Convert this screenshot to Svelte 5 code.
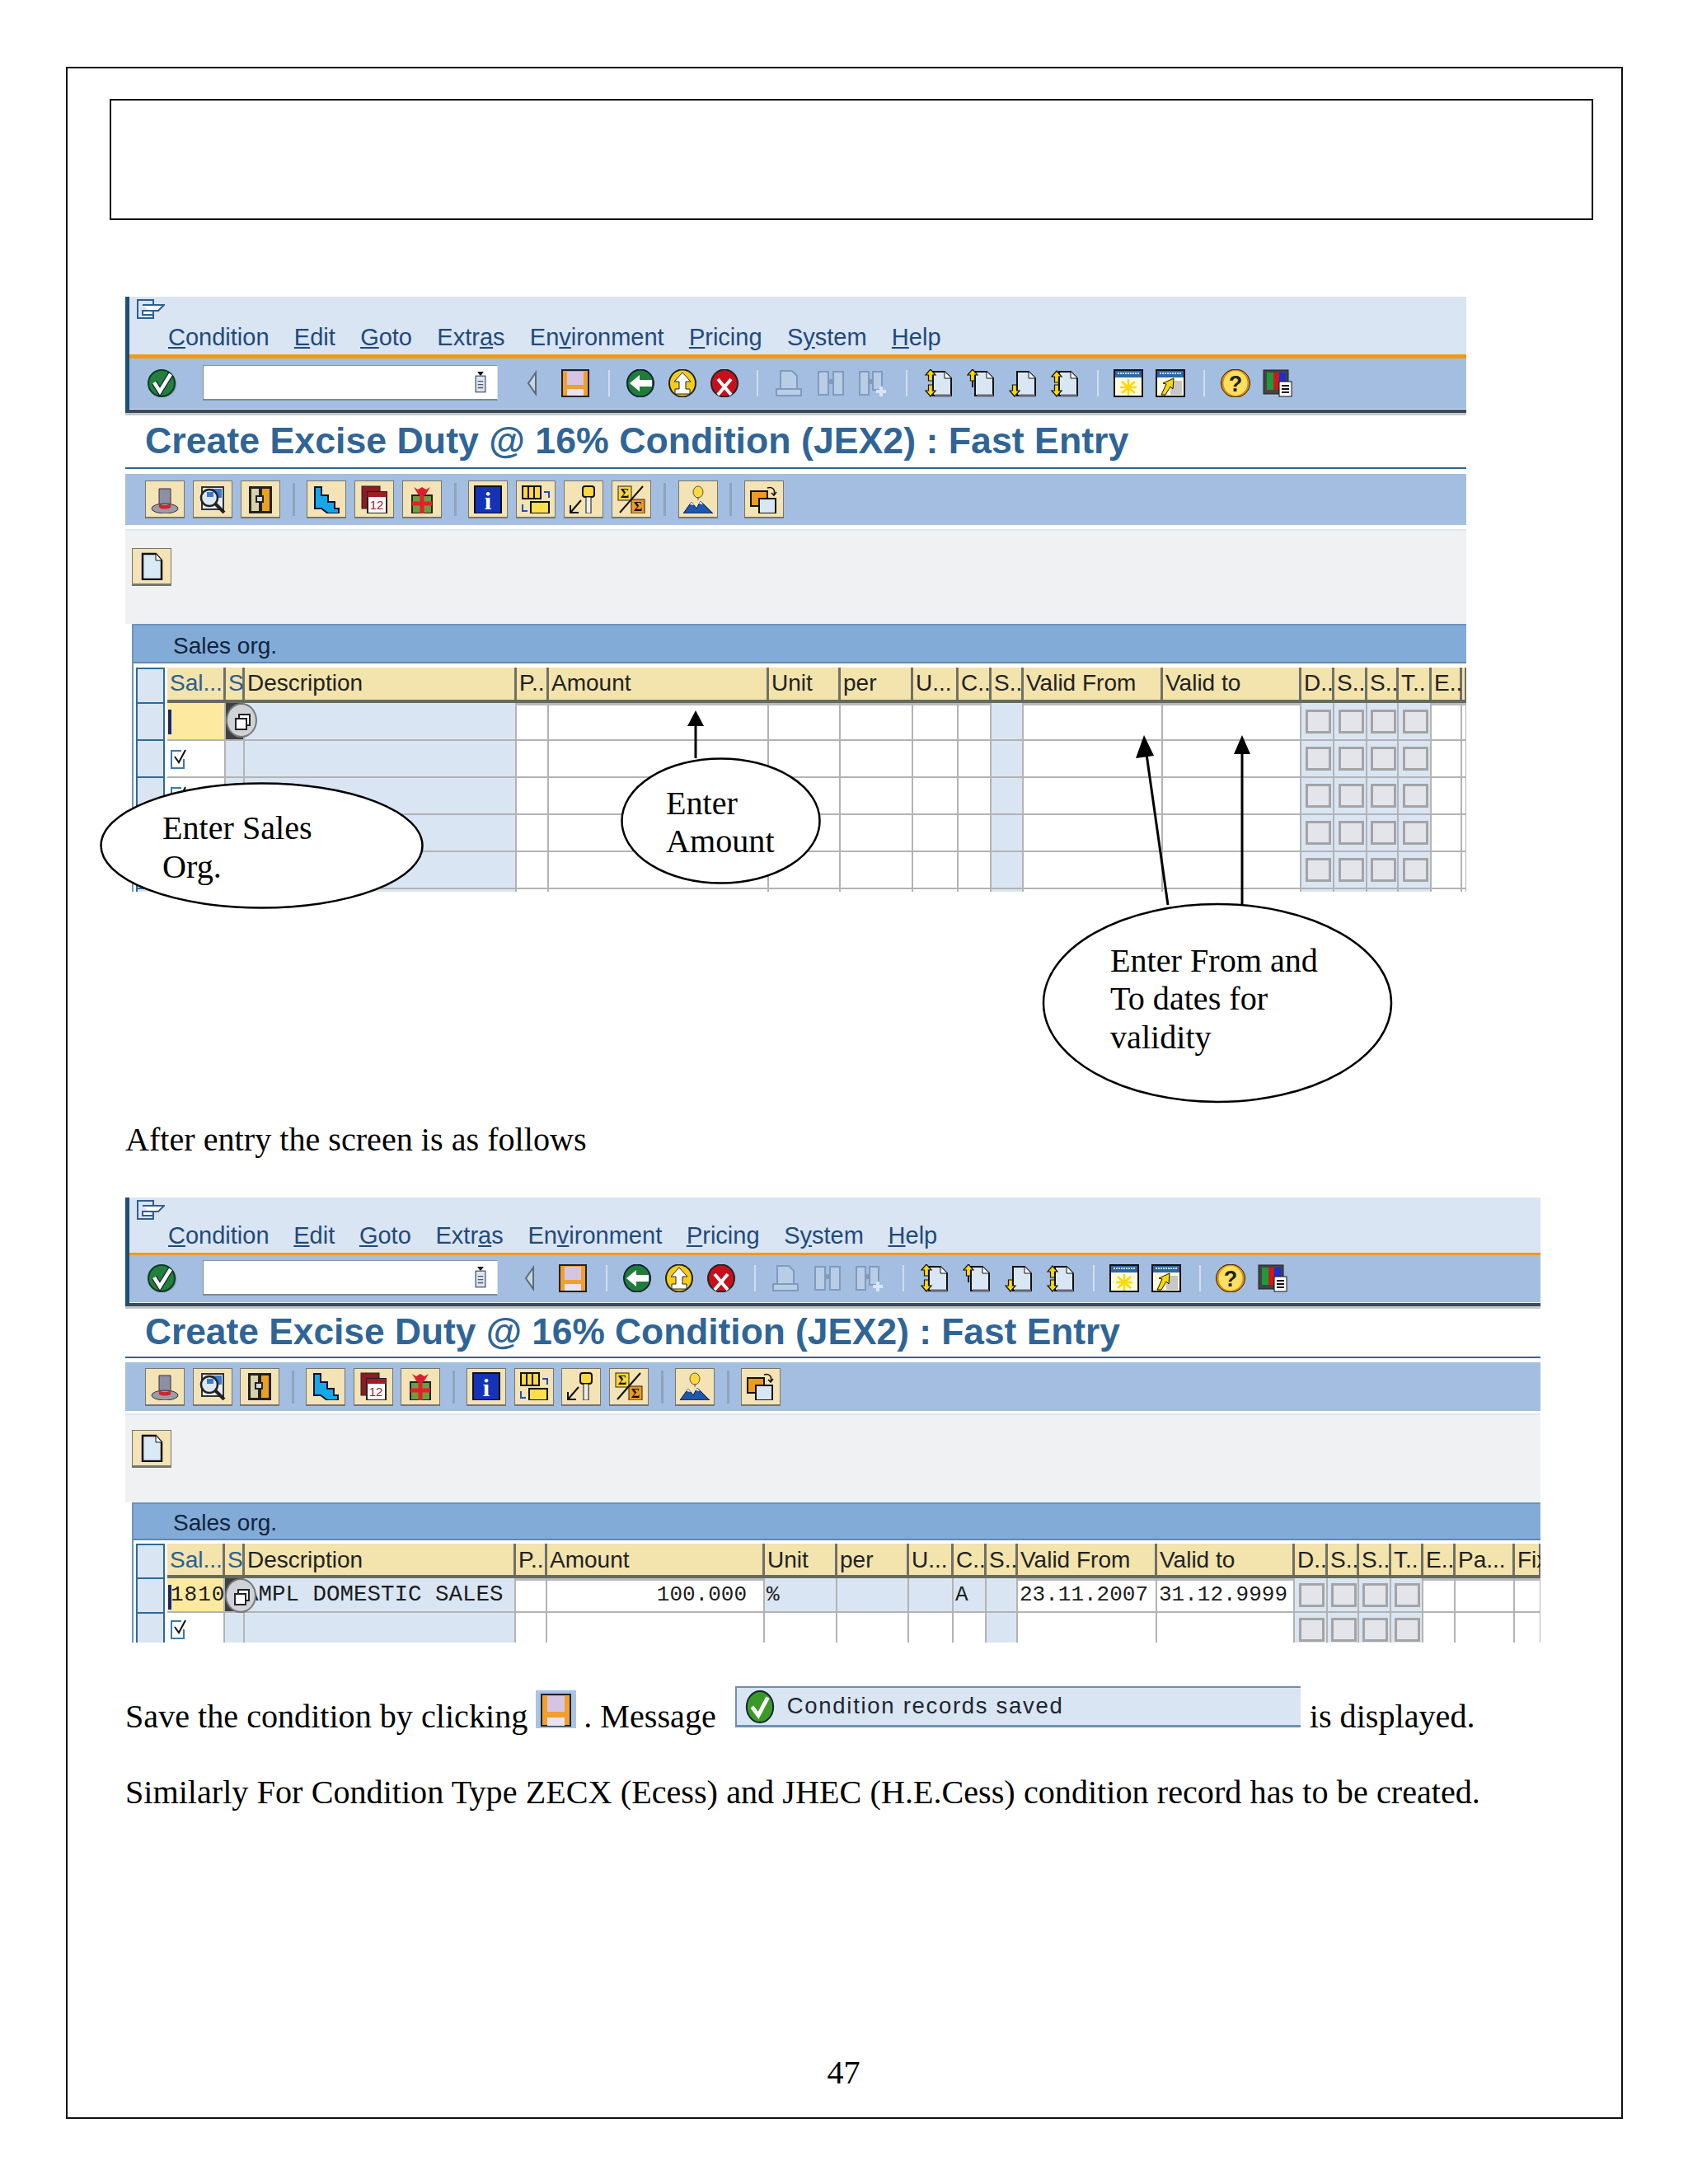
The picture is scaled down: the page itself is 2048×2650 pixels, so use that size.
<script>
	const off = 'stroke="#7f9bbd" fill="#b9cde5" stroke-width="2"';
	const arrowUp = (x, y) => `<path d="M${x} ${y}l6 7h-3.5v7h-5v-7H${x - 6}z" fill="#ffd800" stroke="#111" stroke-width="1.2"/>`;
	const arrowDown = (x, y) => `<path d="M${x} ${y}l6-7h-3.5v-7h-5v7H${x - 6}z" fill="#ffd800" stroke="#111" stroke-width="1.2"/>`;
	const doc = '<path d="M12 3h14l8 8v21H12z" fill="#d9e6f4" stroke="#111" stroke-width="2"/><path d="M26 3v8h8" fill="#fff" stroke="#111"/><path d="M14 32h20" stroke="#667" stroke-width="3"/>';
	const windowTop = '<rect x="1" y="1" width="34" height="32" fill="#fffbe0" stroke="#111" stroke-width="2"/><rect x="2" y="2" width="32" height="8" fill="#2c68a8"/><path d="M5 5h26" stroke="#cfe0f4" stroke-width="2" stroke-dasharray="2 1"/>';

	const icons = {
		check: '<ellipse cx="19" cy="18" rx="16" ry="16" fill="#7f93ad"/><ellipse cx="17" cy="17" rx="16" ry="16" fill="#22803c" stroke="#0d3d20" stroke-width="2"/><path d="M8 16l7 11L28 6" fill="none" stroke="#123" stroke-width="7"/><path d="M8 16l7 11L28 6" fill="none" stroke="#fff" stroke-width="4.5"/>',
		nav: '<path d="M14 4L5 17l9 13z" fill="#c9d6e6" stroke="#5e6b78" stroke-width="2"/>',
		save: '<rect x="2" y="1" width="32" height="32" fill="#f0a02c" stroke="#222" stroke-width="2"/><rect x="8" y="3" width="20" height="16" fill="#d5c5e2"/><rect x="8" y="24" width="20" height="8" fill="#e9e2f0"/>',
		back: '<ellipse cx="18" cy="17" rx="16" ry="16.5" fill="#1f7d3c" stroke="#123" stroke-width="2"/><path d="M5 17l12-10v6h15v8H17v6z" fill="#fff"/>',
		up: '<ellipse cx="18" cy="17" rx="16" ry="16.5" fill="#f6cc1c" stroke="#222" stroke-width="2"/><path d="M18 4l10 11h-6v9h5v6H9v-6h5v-9H8z" fill="#fff" stroke="#222"/>',
		cancel: '<ellipse cx="18" cy="17" rx="16" ry="16.5" fill="#c8101c" stroke="#222" stroke-width="2"/><path d="M10 12l16 19M26 12L10 31" stroke="#fff" stroke-width="4"/>',
		print: `<path d="M8 2h14l6 6v16H8z" ${off}/><rect x="3" y="24" width="30" height="8" ${off}/>`,
		find: `<rect x="3" y="3" width="12" height="28" ${off}/><rect x="21" y="3" width="12" height="28" ${off}/><path d="M15 15h6" stroke="#7f9bbd" stroke-width="6"/>`,
		findNext: `<rect x="2" y="3" width="11" height="28" ${off}/><rect x="18" y="3" width="11" height="22" ${off}/><path d="M13 15h5" stroke="#7f9bbd" stroke-width="6"/><path d="M28 21v12M22 27h12" stroke="#d9e6f4" stroke-width="4"/>`,
		first: doc + arrowUp(9, 0) + arrowDown(9, 33),
		prev: doc + arrowUp(9, 0) + '<path d="M9 14v8" stroke="#111" stroke-width="2"/>',
		next: doc + arrowDown(9, 33),
		last: doc + arrowUp(9, 2) + arrowDown(9, 33),
		newSession: windowTop + '<path d="M18 12v20M8 22h20M10 15l16 14M26 15L10 29" stroke="#ffd800" stroke-width="2.5"/>',
		shortcut: windowTop + '<rect x="18" y="14" width="14" height="17" fill="#c7c7c7"/><path d="M7 31l6-13-4-1 13-6-1 13-3-3-6 10z" fill="#ffd800" stroke="#111"/>',
		help: '<ellipse cx="18" cy="17" rx="16" ry="16.5" fill="#ffe060" stroke="#e08a10" stroke-width="3"/><ellipse cx="18" cy="17" rx="17.5" ry="16.8" fill="none" stroke="#222"/><text x="18" y="27" text-anchor="middle" font-family="Liberation Sans" font-weight="700" font-size="27" fill="#222">?</text>',
		layout: '<rect x="1" y="1" width="30" height="29" fill="#444" stroke="#222"/><rect x="5" y="4" width="8" height="21" fill="#1c9a3c"/><rect x="13" y="4" width="7" height="21" fill="#d01818"/><rect x="20" y="4" width="8" height="21" fill="#1a2fd0"/><rect x="20" y="15" width="15" height="18" fill="#fff" stroke="#111"/><path d="M23 20h9M23 24h9M23 28h9" stroke="#111" stroke-width="2"/>',
		hat: '<path d="M11 4h14v21H11z" fill="#8c8fa6" stroke="#333"/><ellipse cx="18" cy="28" rx="16" ry="6" fill="#9a9ca8" stroke="#333"/><path d="M11 22c4 3 10 3 14 0v5c-4 2-10 2-14 0z" fill="#d9202a"/>',
		detail: '<rect x="5" y="2" width="26" height="27" fill="#e8eef5" stroke="#333" stroke-width="2"/><rect x="11" y="4" width="18" height="11" fill="#3a7bd0"/><circle cx="14" cy="15" r="10" fill="#dce8f4" stroke="#222" stroke-width="2.5"/><path d="M11 8h8v6h-8z" fill="#3a7bd0"/><path d="M21 22l11 11" stroke="#222" stroke-width="4"/>',
		bracket: '<rect x="4" y="1" width="28" height="33" fill="#222"/><rect x="7" y="4" width="9" height="27" fill="#d9d2a8"/><rect x="20" y="4" width="9" height="27" fill="#e8a21e"/><path d="M12 12h10v9H12" fill="#222"/><path d="M14 14h6v5h-6z" fill="#cfd8e0"/>',
		stairs: '<path d="M4 2h8v10h8v8h8v8h5v6H20l-8-6H4z" fill="#14a8e8" stroke="#113" stroke-width="2"/>',
		calendar: '<rect x="3" y="1" width="22" height="27" fill="#8c1c24" stroke="#222"/><rect x="10" y="8" width="23" height="26" fill="#fff" stroke="#222" stroke-width="2"/><rect x="10" y="8" width="23" height="6" fill="#a01c28"/><text x="21" y="29" text-anchor="middle" font-family="Liberation Sans" font-size="15" fill="#a01c28">12</text>',
		gift: '<rect x="6" y="12" width="24" height="22" fill="#6c9e3c" stroke="#222" stroke-width="2"/><path d="M18 12v22M6 22h24" stroke="#e0202c" stroke-width="5"/><path d="M8 2l6 10h8l6-10-5 3-5-3-5 3z" fill="#d9202a"/>',
		info: '<rect x="2" y="1" width="32" height="33" fill="#1433b8" stroke="#111" stroke-width="2"/><text x="18" y="29" text-anchor="middle" font-family="Liberation Serif" font-weight="700" font-size="30" fill="#fff">i</text>',
		columns: '<rect x="2" y="1" width="22" height="15" fill="#ffd83c" stroke="#111" stroke-width="2"/><path d="M9 1v15M16 1v15" stroke="#111" stroke-width="2"/><rect x="12" y="20" width="22" height="14" fill="#ffe04c" stroke="#111" stroke-width="2"/><path d="M28 8h6v7M2 23v8h6" fill="none" stroke="#1c4ec0" stroke-width="2"/>',
		key: '<rect x="17" y="1" width="14" height="13" rx="3" fill="#ffd83c" stroke="#111" stroke-width="2"/><rect x="21" y="14" width="6" height="20" fill="#eee" stroke="#111"/><path d="M2 33l13-15M2 24v9h10" fill="none" stroke="#111" stroke-width="2"/>',
		sigma: '<rect x="2" y="1" width="16" height="17" fill="#ffd83c" stroke="#222"/><rect x="18" y="17" width="16" height="17" fill="#f09a1c" stroke="#222"/><path d="M4 33L32 1" stroke="#111" stroke-width="2"/><text x="10" y="15" text-anchor="middle" font-family="Liberation Serif" font-weight="700" font-size="16" fill="#111">Σ</text><text x="26" y="31" text-anchor="middle" font-family="Liberation Serif" font-weight="700" font-size="16" fill="#111">Σ</text>',
		mountain: '<ellipse cx="18" cy="8" rx="6" ry="7" fill="#ffd83c" stroke="#555"/><path d="M18 14v4" stroke="#555"/><path d="M0 34l10-14 6 8 5-9 15 15z" fill="#1c58b0" stroke="#113"/><path d="M8 23l2-3 3 4zM19 22l2-3 3 4z" fill="#fff"/>',
		copy: '<rect x="2" y="7" width="20" height="18" fill="#f09a1c" stroke="#111" stroke-width="2"/><rect x="12" y="16" width="20" height="18" fill="#d9e6f4" stroke="#111" stroke-width="2"/><path d="M22 3c6-2 10 2 8 8m-3-2l3 3 3-4" fill="none" stroke="#111" stroke-width="1.5"/>',
		page: '<path d="M7 2h16l7 8v23H7z" fill="#d9e9f6" stroke="#111" stroke-width="2.5"/><path d="M23 2v8h7" fill="#fff" stroke="#111"/>'
	};

	const pageGroups = [
		['save'],
		['back', 'up', 'cancel'],
		['print', 'find', 'findNext'],
		['first', 'prev', 'next', 'last'],
		['newSession', 'shortcut'],
		['help', 'layout']
	];
	const appGroups = [
		['hat', 'detail', 'bracket'],
		['stairs', 'calendar', 'gift'],
		['info', 'columns', 'key', 'sigma'],
		['mountain'],
		['copy']
	];
	const menus = [
		['C', 'ondition'], ['E', 'dit'], ['G', 'oto'], ['Extr', 'a', 's'],
		['En', 'v', 'ironment'], ['P', 'ricing'], ['S', 'y', 'stem'], ['H', 'elp']
	];

	// k: sal, btn, blue, white, chk. v: text of the first row. fill: first row turns blue
	const first = [
		{ cls: 'a', rows: 6, cols: [
			{ h: 'Sal...', x: 202, k: 'sal', key: true }, { h: 'S', x: 273, k: 'btn', key: true },
			{ h: 'Description', x: 296, k: 'blue' }, { h: 'P..', x: 626 }, { h: 'Amount', x: 665 },
			{ h: 'Unit', x: 932 }, { h: 'per', x: 1019 }, { h: 'U...', x: 1107 }, { h: 'C..', x: 1162 },
			{ h: 'S..', x: 1202, k: 'blue' }, { h: 'Valid From', x: 1241 }, { h: 'Valid to', x: 1410 },
			{ h: 'D..', x: 1578, k: 'chk' }, { h: 'S..', x: 1618, k: 'chk' }, { h: 'S..', x: 1658, k: 'chk' },
			{ h: 'T..', x: 1696, k: 'chk' }, { h: 'E..', x: 1736 }, { h: '', x: 1773 }
		], end: 1779 },
		{ cls: 'b', rows: 2, cols: [
			{ h: 'Sal...', x: 202, k: 'sal', key: true, v: '1810' }, { h: 'S', x: 272, k: 'btn', key: true },
			{ h: 'Description', x: 296, k: 'blue', v: 'AMPL DOMESTIC SALES' }, { h: 'P..', x: 625 },
			{ h: 'Amount', x: 663, v: '100.000', right: true }, { h: 'Unit', x: 927, fill: true, v: '%' },
			{ h: 'per', x: 1015, fill: true }, { h: 'U...', x: 1102, fill: true }, { h: 'C..', x: 1156, fill: true, v: 'A' },
			{ h: 'S..', x: 1196, k: 'blue' }, { h: 'Valid From', x: 1234, v: '23.11.2007' }, { h: 'Valid to', x: 1403, v: '31.12.9999' },
			{ h: 'D..', x: 1570, k: 'chk' }, { h: 'S..', x: 1610, k: 'chk' }, { h: 'S..', x: 1648, k: 'chk' },
			{ h: 'T..', x: 1687, k: 'chk' }, { h: 'E..', x: 1726 }, { h: 'Pa...', x: 1765 }, { h: 'Fix', x: 1837 }
		], end: 1869 }
	];

	const template = (s) =>
		s.cols.map((c, i) => `${(s.cols[i + 1]?.x ?? s.end) - c.x}px`).join(' ');
	const cellClass = (c, r) => {
		if (c.k === 'sal') return r === 0 ? 'sal' : '';
		if (c.k === 'btn') return r === 0 ? 'dark' : 'blue';
		if (c.k === 'blue' || c.k === 'chk') return 'blue';
		return c.fill && r === 0 ? 'blue' : '';
	};
</script>

{#snippet icon(name)}
	<svg class="ic" viewBox="0 0 36 34">{@html icons[name]}</svg>
{/snippet}

{#snippet screen(s)}
	<section class="screen {s.cls}">
		<div class="head">
			<div class="menubar">
				<svg class="corner" viewBox="0 0 34 24">
					<path d="M1 1h19v22H1z" fill="none" stroke="#2d5f96" stroke-width="2" />
					<path d="M7 7h26l-7 7H7v5h13" fill="#fff" stroke="#2d5f96" stroke-width="2" />
				</svg>
				<nav class="menu">
					{#each menus as m}
						{#if m.length === 2}
							<span><u>{m[0]}</u>{m[1]}</span>
						{:else}
							<span>{m[0]}<u>{m[1]}</u>{m[2]}</span>
						{/if}
					{/each}
				</nav>
			</div>
			<div class="systembar">
				{@render icon('check')}
				<div class="command">
					<svg class="drop" viewBox="0 0 24 40">
						<path d="M6 0h12l-6 8z" fill="#111" />
						<rect x="3" y="8" width="18" height="30" fill="#dbe6f2" stroke="#556" stroke-width="2" />
						<path d="M7 18h10M7 24h10M7 30h10" stroke="#556" stroke-width="2" />
					</svg>
				</div>
				<span class="nav">{@render icon('nav')}</span>
				{#each pageGroups as group, i}
					{#if i > 0}<i class="sep"></i>{/if}
					<div class="group">
						{#each group as name}
							{@render icon(name)}
						{/each}
					</div>
				{/each}
			</div>
		</div>
		<h1>Create Excise Duty @ 16% Condition (JEX2) : Fast Entry</h1>
		<div class="appbar">
			{#each appGroups as group, i}
				{#if i > 0}<i class="sep"></i>{/if}
				<div class="btns">
					{#each group as name}
						<span class="btn">{@render icon(name)}</span>
					{/each}
				</div>
			{/each}
		</div>
		<div class="work">
			<span class="btn create">{@render icon('page')}</span>
		</div>
		<div class="table">
			<div class="caption">Sales org.</div>
			<div class="grid">
				<div class="selectors">
					<i class="sel top"></i>
					{#each Array(s.rows) as _}
						<i class="sel"></i>
					{/each}
				</div>
				<div class="data">
					<div class="thead" style="grid-template-columns: {template(s)}">
						{#each s.cols as c}
							<span class:key={c.key}>{c.h}</span>
						{/each}
					</div>
					{#each Array(s.rows) as _, r}
						<div class="row" style="grid-template-columns: {template(s)}">
							{#each s.cols as c}
								<span class="cell {cellClass(c, r)}" class:right={c.right}>
									{#if c.k === 'sal' && r === 0}<i class="cursor"></i>{/if}
									{#if c.k === 'sal' && r > 0}
										<svg class="tick" viewBox="0 0 24 24">
											<path d="M13 2H1v21h15V12" fill="none" stroke="#3b78b0" stroke-width="2" />
											<path d="M5 9l5 7 8-15" fill="none" stroke="#111" stroke-width="2" />
										</svg>
									{/if}
									{#if c.k === 'btn' && r === 0}
										<b class="round"><i></i><i></i></b>
									{/if}
									{#if c.k === 'chk'}<i class="box"></i>{/if}
									{#if r === 0 && c.v}{c.v}{/if}
								</span>
							{/each}
						</div>
					{/each}
				</div>
			</div>
		</div>
	</section>
{/snippet}

<main class="page">
	<div class="frame">
		<div class="empty"></div>
		{@render screen(first[0])}
		<p class="after">After entry the screen is as follows</p>
		{@render screen(first[1])}
		<div class="saved">
			<span>Save the condition by clicking</span>
			<svg class="save-ic" viewBox="0 0 49 46">
				<rect width="49" height="46" fill="#a8c4e4" />
				<rect x="7" y="5" width="35" height="38" fill="#f0a02c" stroke="#222" stroke-width="2" />
				<rect x="14" y="7" width="21" height="19" fill="#d5c5e2" />
				<rect x="14" y="33" width="21" height="10" fill="#e9e2f0" />
			</svg>
			<span class="period">. Message</span>
			<div class="msg">
				<svg viewBox="0 0 36 42">
					<ellipse cx="18" cy="21" rx="17" ry="20" fill="#3a9a28" stroke="#123" stroke-width="2" />
					<path d="M8 21l8 11L28 9" fill="none" stroke="#fff" stroke-width="5" />
				</svg>
				<span>Condition records saved</span>
			</div>
			<span class="shown">is displayed.</span>
		</div>
		<p class="similar">Similarly For Condition Type ZECX (Ecess) and JHEC (H.E.Cess) condition record has to be created.</p>
		<p class="num">47</p>
	</div>

	<svg class="callouts" viewBox="0 0 2048 2650">
		<ellipse cx="317.5" cy="1026" rx="195" ry="75.5" />
		<ellipse cx="874.5" cy="996" rx="120" ry="75.5" />
		<ellipse cx="1477" cy="1217" rx="211" ry="120" />
		<path class="line" d="M844 920V880M1417 1098L1391 915M1507 1097V912" />
		<path class="head-tip" d="M844 862l10 19h-20zM1388 892l12 25-22 3zM1507 892l10 23h-20z" />
		<text x="197" y="1018">Enter Sales</text>
		<text x="197" y="1065">Org.</text>
		<text x="808" y="988">Enter</text>
		<text x="808" y="1034">Amount</text>
		<text x="1347" y="1179">Enter From and</text>
		<text x="1347" y="1225">To dates for</text>
		<text x="1347" y="1272">validity</text>
	</svg>
</main>

<style>
	:global(body) {
		margin: 0;
		background: #fff;
	}

	.page {
		position: relative;
		width: 2048px;
		height: 2650px;
		padding: 81px 0 0 80px;
		box-sizing: border-box;
		overflow: hidden;
		font-family: "Liberation Serif", serif;
		font-size: 40.15px;
		line-height: 46px;
		color: #000;
	}

	.frame {
		width: 1889px;
		height: 2490px;
		box-sizing: border-box;
		border: 2px solid #111;
		padding-left: 70px;
	}

	.empty {
		width: 1800px;
		height: 147px;
		box-sizing: border-box;
		margin: 37px 0 0 -19px;
		border: 2px solid #111;
	}

	p {
		margin: 0;
	}

	.after {
		margin-top: 278px;
	}

	.saved {
		display: flex;
		align-items: flex-end;
		height: 60px;
		margin-top: 53px;
	}

	.save-ic {
		width: 49px;
		height: 46px;
		margin: 0 9px 9px 10px;
	}

	.msg {
		display: flex;
		align-items: flex-start;
		gap: 15px;
		width: 686px;
		height: 50px;
		box-sizing: border-box;
		margin: 0 11px 10px 23px;
		padding: 4px 0 0 10px;
		border-top: 2px solid #6f8fae;
		border-bottom: 3px solid #6f8fae;
		border-left: 2px solid #6f8fae;
		background: #d9e5f2;
		font-family: "Liberation Sans", sans-serif;
		font-size: 27.5px;
		letter-spacing: 1.7px;
		line-height: 36px;
		color: #1d2530;
	}

	.msg svg {
		width: 36px;
		height: 40px;
		margin-top: -1px;
	}

	.similar {
		margin-top: 46px;
		word-spacing: 0.22px;
	}

	.num {
		width: 1883px;
		margin: 294px 0 0 -70px;
		text-align: center;
	}

	.screen {
		overflow: hidden;
		font-family: "Liberation Sans", sans-serif;
		font-size: 28px;
		line-height: 32px;
		background: #fff;
	}

	.screen.a {
		width: 1627px;
		height: 722px;
		margin-top: 93px;
	}

	.screen.b {
		width: 1717px;
		height: 540px;
		margin-top: 47px;
	}

	.head {
		border-left: 5px solid #1d4f7a;
		border-bottom: 4px solid #3b4a58;
		box-shadow: 0 3px 0 #c4c8cc;
	}

	.menubar {
		display: flex;
		flex-direction: column;
		justify-content: space-between;
		box-sizing: content-box;
		height: 70px;
		border-bottom: 5px solid #f39a14;
		background: #d9e5f2;
	}

	.b .menubar {
		height: 67px;
		border-bottom-width: 3px;
	}

	.corner {
		width: 34px;
		height: 24px;
		margin: 3px 0 0 9px;
	}

	.menu {
		display: flex;
		gap: 30.3px;
		padding: 0 0 5px 47px;
		font-size: 29px;
		color: #1f4a7c;
	}

	.b .menu {
		gap: 29.7px;
	}

	.systembar {
		display: flex;
		align-items: center;
		height: 62px;
		padding: 0 0 2px 22px;
		background: #a3bee0;
		border-bottom: 1px solid #eef3f9;
		box-sizing: border-box;
	}

	.b .systembar {
		height: 58px;
	}

	.ic {
		display: block;
		width: 36px;
		height: 34px;
	}

	.command {
		display: flex;
		justify-content: flex-end;
		align-items: center;
		width: 358px;
		height: 43px;
		box-sizing: border-box;
		margin-left: 31px;
		padding-right: 8px;
		background: #fff;
		border-right: 1px solid #dce4ee;
		border-bottom: 2px solid #7f8a96;
		border-left: 1px solid #7f8a96;
		border-top: 1px solid #8a94a0;
	}

	.drop {
		width: 24px;
		height: 26px;
	}

	.nav {
		margin-left: 32px;
		width: 28px;
	}

	.b .nav {
		margin-left: 29px;
	}

	.group {
		display: flex;
		gap: 15px;
		margin-left: 0;
	}

	.nav + .group {
		margin-left: 16px;
	}

	.sep {
		display: block;
		width: 2px;
		height: 32px;
		margin: 0 18.8px 0 21.8px;
		background: #d2deec;
	}

	.b .systembar .sep {
		margin: 0 18.5px 0 21.5px;
	}

	h1 {
		display: flex;
		align-items: center;
		height: 68px;
		box-sizing: border-box;
		margin: 0;
		padding: 2px 0 0 24px;
		border-bottom: 2px solid #2f6596;
		font-size: 44.7px;
		font-weight: 700;
		line-height: 1;
		color: #2f6596;
	}

	.b h1 {
		height: 63px;
		font-size: 44.3px;
	}

	.appbar {
		display: flex;
		align-items: center;
		height: 62px;
		box-sizing: border-box;
		margin-top: 6px;
		padding-left: 24px;
		background: #a3bee0;
	}

	.b .appbar {
		height: 59px;
		margin-top: 5px;
	}

	.appbar .sep {
		width: 3px;
		height: 40px;
		margin: 0 14.6px;
		background: #8fa3bc;
	}

	.b .appbar .sep {
		margin: 0 14px 0 15px;
	}

	.btns {
		display: flex;
		gap: 10px;
	}

	.b .btns {
		gap: 9.5px;
	}

	.btn {
		display: flex;
		align-items: center;
		justify-content: center;
		width: 48px;
		height: 46px;
		box-sizing: border-box;
		background: #f3e3b5;
		border: 1px solid #75766e;
		border-bottom-width: 2px;
	}

	.work {
		height: 115px;
		box-sizing: border-box;
		margin-top: 5px;
		padding: 21px 0 0 8px;
		background: #f0f1f3;
		border-top: 2px solid #dde7f2;
	}

	.b .work {
		height: 108px;
		margin-top: 3px;
		padding-top: 18px;
	}

	.create {
		border-bottom-width: 3px;
	}

	.table {
		margin-left: 8px;
		border-left: 2px solid #6a96bd;
	}

	.caption {
		height: 48px;
		box-sizing: border-box;
		padding: 9px 0 0 48px;
		background: #82abd8;
		border-top: 2px solid #6b95bb;
		border-bottom: 2px solid #5f88b0;
		color: #122338;
	}

	.b .caption {
		height: 46px;
		padding-top: 7px;
	}

	.grid {
		display: flex;
		margin-top: 5px;
	}

	.b .grid {
		margin-top: 4px;
	}

	.selectors {
		width: 37px;
		margin-left: 3px;
		flex: none;
	}

	.data {
		margin-left: 1px;
	}

	.sel {
		display: block;
		width: 35px;
		height: 45px;
		box-sizing: border-box;
		background: #d9e5f2;
		border: 2px solid #2d6a9a;
		border-bottom: 0;
	}

	.sel.top {
		height: 42px;
	}

	.b .sel {
		height: 42px;
	}

	.b .sel.top {
		height: 41px;
	}

	.thead,
	.row {
		display: grid;
	}

	.thead {
		height: 43px;
		box-sizing: border-box;
		border-bottom: 4px solid #666a60;
		box-shadow: 0 3px 0 #b8bcc0;
		background: #6f7068;
	}

	.b .thead {
		height: 42px;
	}

	.thead span {
		margin-right: 3px;
		padding: 3px 0 0 3px;
		background: #f3e3ac;
		color: #222;
		white-space: nowrap;
	}

	.b .thead span {
		padding-top: 4px;
	}

	.thead .key {
		color: #2a5f94;
	}

	.row {
		height: 45px;
		box-sizing: border-box;
		border-bottom: 2px solid #b3b3b3;
	}

	.thead + .row {
		height: 46px;
	}

	.b .row,
	.b .thead + .row {
		height: 42px;
	}

	.cell {
		position: relative;
		display: flex;
		align-items: center;
		box-sizing: border-box;
		padding-left: 2px;
		border-right: 2px solid #b3b3b3;
		font-family: "Liberation Mono", monospace;
		font-size: 26px;
		white-space: nowrap;
		color: #1c1c1c;
	}

	.cell.blue {
		background: #d9e5f2;
	}

	.cell.sal {
		background: #fde9a0;
		padding-left: 4px;
		letter-spacing: 1px;
	}

	.cell.dark {
		background: #3f4044;
	}

	.cell.right {
		justify-content: flex-end;
		padding-right: 20px;
	}

	.b .cell:nth-child(3) {
		padding-left: 0;
		font-size: 27.5px;
	}

	.cursor {
		position: absolute;
		left: 1px;
		top: 8px;
		width: 4px;
		height: 30px;
		background: #16276e;
	}

	.tick {
		width: 24px;
		height: 24px;
		margin-left: 2px;
	}

	.round {
		position: absolute;
		z-index: 1;
		left: 0;
		top: 0;
		width: 38px;
		height: 42px;
		box-sizing: border-box;
		border: 2px solid #777;
		border-radius: 50%;
		background: #cfd3d8;
	}

	.round i {
		position: absolute;
		width: 11px;
		height: 11px;
		left: 13px;
		top: 11px;
		border: 2px solid #222;
		background: #fff;
	}

	.round i + i {
		left: 9px;
		top: 16px;
	}

	.box {
		display: block;
		width: 31px;
		height: 29px;
		box-sizing: border-box;
		margin: 0 auto;
		background: #e3e5ea;
		border: 3px solid #a4a4a4;
	}

	.callouts {
		position: absolute;
		left: 0;
		top: 0;
		width: 2048px;
		height: 2650px;
		pointer-events: none;
	}

	.callouts ellipse {
		fill: #fff;
		stroke: #000;
		stroke-width: 2.5;
	}

	.callouts .line {
		fill: none;
		stroke: #000;
		stroke-width: 3;
	}

	.callouts .head-tip {
		fill: #000;
	}

	.callouts text {
		font-family: "Liberation Serif", serif;
		font-size: 40.15px;
	}
</style>
